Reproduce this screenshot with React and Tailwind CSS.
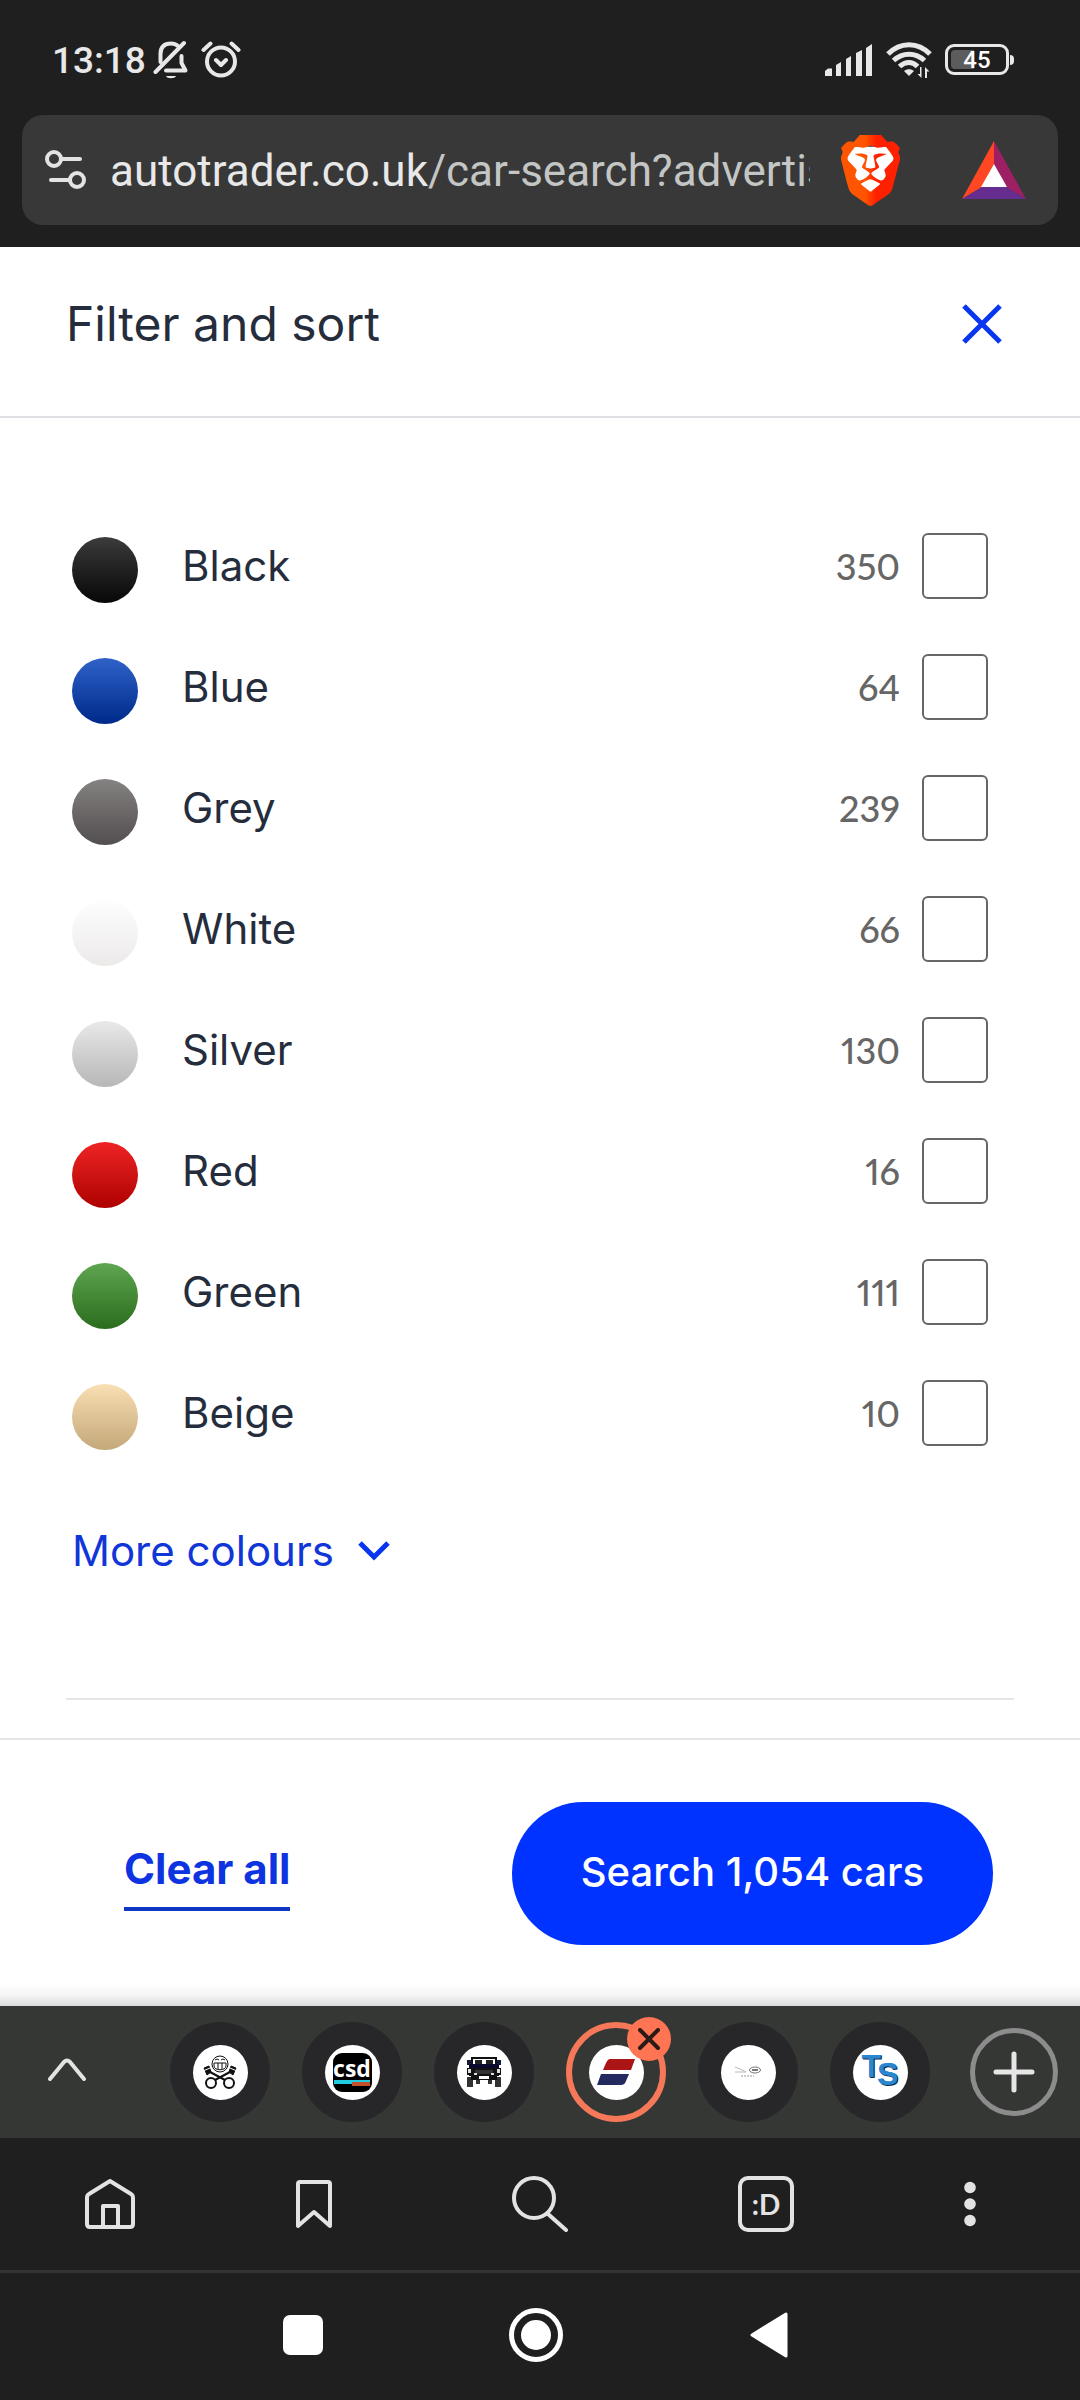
import React, { useState } from "react";

const colours = [
  { name: "Black", count: 350, swatch: "from-[#3c3c3c] to-[#080808]" },
  { name: "Blue", count: 64, swatch: "from-[#2f62c8] to-[#00298a]" },
  { name: "Grey", count: 239, swatch: "from-[#858282] to-[#534e4f]" },
  { name: "White", count: 66, swatch: "from-[#fefefe] to-[#ece9e9]" },
  { name: "Silver", count: 130, swatch: "from-[#e9e9e9] to-[#b7b7b7]" },
  { name: "Red", count: 16, swatch: "from-[#ef2323] to-[#ae0000]" },
  { name: "Green", count: 111, swatch: "from-[#5fa650] to-[#2a6d1c]" },
  { name: "Beige", count: 10, swatch: "from-[#f9dfb3] to-[#c4a87a]" },
];

/* Status bar */
function StatusBar() {
  return (
    <div className="flex h-[115px] items-center justify-between pl-[52px] pr-[66px] pt-1 text-[#e8e8e8]">
      <div className="flex items-center">
        <span className="w-[101px] pt-[3px] text-[37px] leading-[44px] font-medium">13:18</span>
        <svg width="36" height="40" viewBox="0 0 36 40" fill="none" stroke="currentColor" strokeWidth="4" strokeLinecap="round" strokeLinejoin="round">
          <path d="M7.500 22V14C7.500 6 12 3.500 18 3.500c3 0 5 .7 7 2.500M28.500 16v7l4 7.500H13" />
          <path d="M2.500 32L31 3" />
          <path d="M13 36h10c-1 3-9 3-10 0z" fill="currentColor" stroke="none" />
        </svg>
        <svg className="ml-3" width="40" height="40" viewBox="0 0 40 40" fill="none" stroke="currentColor" strokeWidth="4" strokeLinecap="round" strokeLinejoin="round">
          <circle cx="20" cy="21.500" r="14" />
          <path d="M15 20l5 5 5-5M2.500 10l7-6.500M37.500 10l-7-6.500" />
        </svg>
      </div>
      <div className="flex items-center">
        <svg width="48" height="32" viewBox="0 0 48 32" fill="currentColor">
          <path d="M0 32v-5l3-2.500h4V32zM11 32V21l5-3v14zM21 32V15l5-3v20zM31 32V9l6-3v26zM41 32V4l6-4v32z" />
        </svg>
        <svg className="ml-3" width="48" height="38" viewBox="0 0 48 38" fill="none" stroke="currentColor" strokeWidth="5">
          <path d="M3 13c12-12.500 30-12.500 42 0M8.500 19.500c9-8.500 22-8.500 31 0M14.500 25.500c6-5.500 13-5.500 18 0" />
          <path d="M19 30c3-2.500 7-2.500 10 0l-5 5z" fill="currentColor" stroke="none" />
          <path d="M36.500 26v11l-4-4h2.500v-7zM40 37V26l4.500 4.500H42V37z" fill="currentColor" stroke="none" />
        </svg>
        <div className="ml-3 flex h-[31px] w-16 items-center rounded-[9px] border-3 border-current p-[3px]">
          <div className="flex h-full w-full items-center justify-center rounded-sm bg-linear-to-r from-[#5c5c5c] from-45% to-transparent to-45% text-[24px] leading-none font-medium text-white">
            45
          </div>
        </div>
        <div className="ml-px h-[10px] w-1 rounded-r-sm bg-current" />
      </div>
    </div>
  );
}

function BraveLogo() {
  return (
    <svg width="59" height="71" viewBox="1.900 0 20.200 24" preserveAspectRatio="none">
      <defs>
        <linearGradient id="brave" x1="0" x2="1" y1="0" y2="0">
          <stop offset="0.400" stopColor="#ff5500" />
          <stop offset="0.600" stopColor="#ff2000" />
        </linearGradient>
      </defs>
      <path d="M4 4h16v9l-5 7H9l-5-7z" fill="#fff" />
      <path
        fill="url(#brave)"
        d="M15.68 0l2.096 2.38s1.84-.512 2.709.358c.868.87 1.584 1.638 1.584 1.638l-.562 1.381.715 2.047s-2.104 7.980-2.350 8.955c-.486 1.919-.818 2.660-2.198 3.633-1.380.972-3.884 2.660-4.293 2.916-.409.256-.920.692-1.380.692-.460 0-.970-.436-1.380-.692a185.796 185.796 0 01-4.293-2.916c-1.380-.973-1.712-1.714-2.197-3.633-.247-.975-2.351-8.955-2.351-8.955l.715-2.047-.562-1.381s.716-.768 1.585-1.638c.868-.870 2.708-.358 2.708-.358L8.321 0h7.360zm-3.679 14.936c-.140 0-1.038.317-1.758.690-.720.373-1.242.637-1.409.742-.167.104-.065.301.087.409.152.107 2.194 1.690 2.393 1.866.198.175.489.464.687.464.198 0 .490-.290.688-.464.198-.175 2.240-1.759 2.392-1.866.152-.108.254-.305.087-.410-.167-.104-.689-.368-1.410-.741-.720-.373-1.617-.690-1.757-.690zm0-11.278s-.409.001-1.022.206-1.278.460-1.584.460c-.307 0-2.581-.434-2.581-.434S4.119 7.152 4.119 7.849c0 .697.339.881.680 1.243l2.020 2.149c.192.203.590.511.356 1.066-.235.555-.580 1.260-.196 1.977.384.716 1.042 1.194 1.464 1.115.421-.080 1.412-.598 1.776-.834.364-.237 1.518-1.190 1.518-1.554 0-.365-1.193-1.020-1.413-1.168-.220-.150-1.226-.725-1.247-.950-.020-.227-.012-.293.284-.851.297-.559.831-1.304.742-1.800-.089-.495-.950-.753-1.565-.986-.615-.232-1.799-.671-1.947-.740-.148-.068-.110-.133.339-.175.448-.043 1.719-.212 2.292-.052.573.160 1.552.403 1.632.532.079.130.149.134.067.579-.081.445-.500 2.581-.541 2.960-.040.380-.120.630.288.724.409.094 1.097.256 1.333.256s.924-.162 1.333-.256c.408-.093.329-.344.288-.723-.040-.380-.460-2.516-.541-2.961-.082-.445-.012-.450.067-.579.080-.129 1.059-.372 1.632-.532.573-.160 1.845.009 2.292.052.449.042.487.107.339.175-.148.069-1.332.508-1.947.740-.615.233-1.476.490-1.565.986-.090.496.445 1.241.742 1.800.297.558.304.624.284.850-.020.226-1.026.802-1.247.950-.220.150-1.413.804-1.413 1.169 0 .364 1.154 1.317 1.518 1.554.364.236 1.355.755 1.776.834.422.079 1.080-.400 1.464-1.115.384-.716.039-1.422-.195-1.977-.235-.555.163-.863.355-1.066l2.020-2.149c.341-.362.680-.546.680-1.243 0-.697-2.695-3.960-2.695-3.960s-2.274.436-2.580.436c-.307 0-.972-.256-1.585-.461-.613-.205-1.022-.206-1.022-.206z"
      />
    </svg>
  );
}

function AddressBar() {
  return (
    <div className="mx-[22px] mb-[22px] flex h-[110px] items-center rounded-[21px] bg-[#383838] pl-[22px] pr-8">
      <button aria-label="Site settings" className="shrink-0 text-[#e3e3e3]">
        <svg width="44" height="42" viewBox="0 0 44 42" fill="none" stroke="currentColor" strokeWidth="4" strokeLinecap="round">
          <circle cx="10" cy="10" r="7" />
          <path d="M18 10h18M7 31h18" />
          <circle cx="33" cy="31" r="7" />
        </svg>
      </button>
      <div className="ml-[22px] min-w-0 flex-1 overflow-hidden pt-[2px] text-[44px] leading-[56px] whitespace-nowrap text-[#c3c6c4]">
        <span className="text-[#e8e8e8]">autotrader.co.uk</span>/car-search?advertis
      </div>
      <button aria-label="Brave Shields" className="ml-[31px] shrink-0">
        <BraveLogo />
      </button>
      <button aria-label="Brave Rewards" className="ml-[62px] shrink-0">
        <svg width="64" height="58" viewBox="0 0 64 58">
          <path d="M32 0L0 58l20-12 12-23z" fill="#ff4724" />
          <path d="M32 0l32 58-20-12-12-23z" fill="#9e1f63" />
          <path d="M0 58h64L44 46H20z" fill="#662d91" />
          <path d="M32 23l13 23H19z" fill="#fff" />
        </svg>
      </button>
    </div>
  );
}

function ColourRow({ colour }) {
  const [checked, setChecked] = useState(false);
  return (
    <li>
      <label className="flex h-[121px] items-center">
        <span className={`mt-2 size-[66px] rounded-full bg-linear-to-b ${colour.swatch}`} />
        <span className="ml-11 flex-1 text-[42px] leading-[48px]">{colour.name}</span>
        <span className="font-[Lato,sans-serif] text-[36px] leading-[48px] font-medium text-[#666] proportional-nums">{colour.count}</span>
        <input
          type="checkbox"
          checked={checked}
          onChange={(e) => setChecked(e.target.checked)}
          className="ml-[22px] size-[66px] appearance-none rounded-[6px] border-2 border-[#666] bg-white checked:bg-[#0033ff]"
        />
      </label>
    </li>
  );
}

/* Favicons of the open tabs */
function PistonsIcon() {
  return (
    <svg width="36" height="34" viewBox="0 0 36 34" fill="none" stroke="#111" strokeWidth="1">
      <circle cx="18" cy="9" r="8" />
      <path d="M12 8h12v3c0 5-12 5-12 0zM16 8v6M20 8v6M13 5q2-2 4 0M19 5q2-2 4 0" />
      <path d="M8 17l15 8M28 17l-15 8" strokeWidth="2" />
      <path d="M2 13l5-2 2 6-4 3zM34 13l-5-2-2 6 4 3z" fill="#111" />
      <path d="M1 16l7-3M35 16l-7-3" stroke="#fff" />
      <circle cx="9" cy="28" r="5" fill="#fff" strokeWidth="2" />
      <circle cx="27" cy="28" r="5" fill="#fff" strokeWidth="2" />
    </svg>
  );
}

function CsdIcon() {
  return (
    <span className="flex size-[39px] flex-col items-center rounded-[9px] bg-black">
      <span className="mt-[3px] font-['Open_Sans',sans-serif] text-[23px] leading-[24px] font-bold text-white">csd</span>
      <span className="flex h-[6px] w-9 items-start">
        <span className="h-1 w-1/2 bg-[#20cde0]" />
        <span className="h-full w-1/2 border-t-2 border-[#20cde0] bg-[#c4512c]" />
      </span>
    </span>
  );
}

function JeepIcon() {
  return (
    <svg width="36" height="32" viewBox="0 0 36 32">
      <path d="M6 2h24v8H6z" fill="#fff" stroke="#111" strokeWidth="2" />
      <path d="M9 4h7v5H9zM20 4h7v5h-7z" fill="#222" />
      <path d="M1 4h4v5H1zM31 4h4v5h-4z" fill="#151a3a" />
      <path d="M3 8h30v12H3z" fill="#0a0a2e" />
      <path d="M1 12h34v7H1z" fill="#111" />
      <path d="M9 14h18v4H9z" fill="#333" />
      <path d="M2 13h3v4H2zM31 13h3v4h-3zM8 17h3v3H8zM25 17h3v3h-3z" fill="#ddd" />
      <path d="M1 21h6v10H1zM29 21h6v10h-6zM10 22h4v6h-4zM22 22h4v6h-4z" fill="#333" />
      <path d="M5 19h26v5H5z" fill="#111" />
      <path d="M13 20h10v3H13z" fill="#fff" />
    </svg>
  );
}

function AutoTraderIcon() {
  return (
    <svg width="38" height="28" viewBox="0 0 38 28">
      <path d="M6 12L9 5C11 1 12 1 14 1h24l-4 11z" fill="#ac1515" />
      <path d="M4 16h28l-3 7c-1 3-3 4-5 4H0z" fill="#232a60" />
    </svg>
  );
}

function DealerIcon() {
  return (
    <svg width="28" height="12" viewBox="0 0 28 12" fill="none" stroke="#777" strokeWidth="1">
      <path d="M1 1l5 2 6 3M1 6h11" stroke="#bbb" />
      <ellipse cx="21" cy="4" rx="5.500" ry="3" />
      <path d="M18 4h6" strokeWidth="2" />
      <path d="M7 10h13" stroke="#999" strokeDasharray="2 1" />
    </svg>
  );
}

function TsIcon() {
  return (
    <span className="flex font-['Liberation_Sans',sans-serif] text-[32px] leading-[32px] font-bold text-[#2b86d0] [text-shadow:1px_1px_0_#0d3050,1px_0_0_#2b86d0]">
      <span className="-mt-1">T</span>
      <span className="mt-1 -ml-1">S</span>
    </span>
  );
}

const tabs = [
  { title: "Pistons", icon: PistonsIcon },
  { title: "CSD", icon: CsdIcon },
  { title: "4x4", icon: JeepIcon },
  { title: "Auto Trader", icon: AutoTraderIcon, active: true },
  { title: "Dealer", icon: DealerIcon },
  { title: "TS", icon: TsIcon },
];

function TabStrip() {
  return (
    <div className="flex h-[132px] items-center justify-between bg-[#353735] pl-[45px] pr-[22px]">
      <button aria-label="Show tabs" className="text-[#e3e3e3]">
        <svg width="44" height="28" viewBox="0 0 44 28" fill="none" stroke="currentColor" strokeWidth="4" strokeLinecap="round" strokeLinejoin="round">
          <path d="M5 21L19 4q3-3 6 0l14 17" />
        </svg>
      </button>
      <div className="ml-[41px] flex gap-8">
        {tabs.map((t) => (
          <div key={t.title} className="relative">
            <button
              aria-label={t.title}
              className={`flex size-[100px] items-center justify-center rounded-full ${
                t.active ? "border-6 border-[#f57858]" : "bg-[#272729]"
              }`}
            >
              <span className="flex size-[55px] items-center justify-center rounded-full bg-white">
                <t.icon />
              </span>
            </button>
            {t.active && (
              <button aria-label="Close tab" className="absolute -top-[5px] -right-[5px] flex size-11 items-center justify-center rounded-full bg-[#ff7452]">
                <svg width="22" height="22" viewBox="0 0 22 22" stroke="#2b1a16" strokeWidth="4" strokeLinecap="round">
                  <path d="M2 2l18 18M20 2L2 20" />
                </svg>
              </button>
            )}
          </div>
        ))}
      </div>
      <button aria-label="New tab" className="flex size-[88px] items-center justify-center rounded-full border-5 border-[#8c8c8c] text-[#e6e6e6]">
        <svg width="42" height="42" viewBox="0 0 42 42" stroke="currentColor" strokeWidth="5" strokeLinecap="round">
          <path d="M21 3v36M3 21h36" />
        </svg>
      </button>
    </div>
  );
}

function BrowserNav() {
  return (
    <nav className="grid h-[135px] grid-cols-[220fr_188fr_264fr_188fr_220fr] items-center justify-items-center border-b-3 border-[#333] text-[#e3e3e3]">
      <button aria-label="Home">
        <svg width="54" height="54" viewBox="0 0 54 54" fill="none" stroke="currentColor" strokeWidth="4" strokeLinejoin="round">
          <path d="M27 4L6 17q-2 1-2 4v26q0 3 3 3h40q3 0 3-3V21q0-3-2-4z" />
          <path d="M20 50V29h15v21" />
        </svg>
      </button>
      <button aria-label="Bookmarks">
        <svg width="40" height="54" viewBox="0 0 40 54" fill="none" stroke="currentColor" strokeWidth="4" strokeLinejoin="round">
          <path d="M6 5h28q2 0 2 2v42L20 35 4 49V7q0-2 2-2z" />
        </svg>
      </button>
      <button aria-label="Search">
        <svg width="56" height="56" viewBox="0 0 56 56" fill="none" stroke="currentColor" strokeWidth="4" strokeLinecap="round">
          <circle cx="22" cy="22" r="20" />
          <path d="M36 38l18 16" />
        </svg>
      </button>
      <button aria-label="Tabs" className="flex size-14 items-center justify-center rounded-[10px] border-4 border-current font-[Lato,sans-serif] text-[28px] leading-none font-bold">
        :D
      </button>
      <button aria-label="Menu">
        <svg width="14" height="46" viewBox="0 0 14 46" fill="currentColor">
          <circle cx="7" cy="6.500" r="5.800" />
          <circle cx="7" cy="23" r="5.800" />
          <circle cx="7" cy="39.500" r="5.800" />
        </svg>
      </button>
    </nav>
  );
}

function SystemNav() {
  return (
    <nav className="flex h-[127px] items-center justify-center pr-2 pb-1 text-white">
      <button aria-label="Recents" className="flex w-[233px] justify-center">
        <span className="size-10 rounded-[7px] bg-current" />
      </button>
      <button aria-label="Home screen" className="flex w-[233px] justify-center">
        <span className="flex size-[54px] items-center justify-center rounded-full border-5 border-current">
          <span className="size-[30px] rounded-full bg-current" />
        </span>
      </button>
      <button aria-label="Back" className="flex w-[233px] justify-center">
        <svg width="38" height="46" viewBox="0 0 38 46" fill="currentColor" stroke="currentColor" strokeWidth="3" strokeLinejoin="round">
          <path d="M2 23L36 2v42z" />
        </svg>
      </button>
    </nav>
  );
}

export default function App() {
  return (
    <div className="flex min-h-screen flex-col bg-white font-[Inter,sans-serif] text-[#252d3d]">
      <header className="bg-[#1f1f1f] font-[Roboto,sans-serif]">
        <StatusBar />
        <AddressBar />
      </header>

      <div className="flex h-[171px] items-center justify-between border-b-2 border-[#dfe0e3] pl-[66px] pr-[76px] pb-4">
        <h1 className="text-[48px] leading-[56px]">Filter and sort</h1>
        <button aria-label="Close" className="text-[#0835f0]">
          <svg width="44" height="44" viewBox="0 0 44 44" stroke="currentColor" strokeWidth="5">
            <path d="M4 4l36 36M40 4L4 40" />
          </svg>
        </button>
      </div>

      <main className="flex-1 px-[66px] pt-[87px]">
        <ul className="pl-[6px] pr-[26px]">
          {colours.map((c) => (
            <ColourRow key={c.name} colour={c} />
          ))}
        </ul>
        <button className="mt-[54px] ml-[6px] flex items-center gap-6 text-[42px] leading-[48px] text-[#1036d8]">
          More colours
          <svg width="32" height="20" viewBox="0 0 32 20" fill="none" stroke="#0835f0" strokeWidth="5">
            <path d="M2 2l14 14L30 2" />
          </svg>
        </button>
        <hr className="mt-[123px] border-t-2 border-[#e5e5e5]" />
      </main>

      <footer className="border-t-2 border-[#e6e6e2]">
        <div className="flex items-center justify-between pt-[62px] pr-[87px] pb-[39px] pl-[124px]">
          <button className="border-b-4 border-[#1036c4] pt-[9px] pb-[14px] text-[42px] leading-[48px] font-bold text-[#0d34e0]">Clear all</button>
          <button className="h-[143px] rounded-full bg-[#0033ff] px-[69px] pb-1 text-[40px] leading-[48px] font-medium text-white">
            Search 1,054 cars
          </button>
        </div>
        <div className="h-[22px] bg-linear-to-b from-white via-[#f5f5f5] to-[#dcdcdc]" />
      </footer>

      <div className="bg-[#1f1f1f] font-[Roboto,sans-serif]">
        <TabStrip />
        <BrowserNav />
        <SystemNav />
      </div>
    </div>
  );
}
